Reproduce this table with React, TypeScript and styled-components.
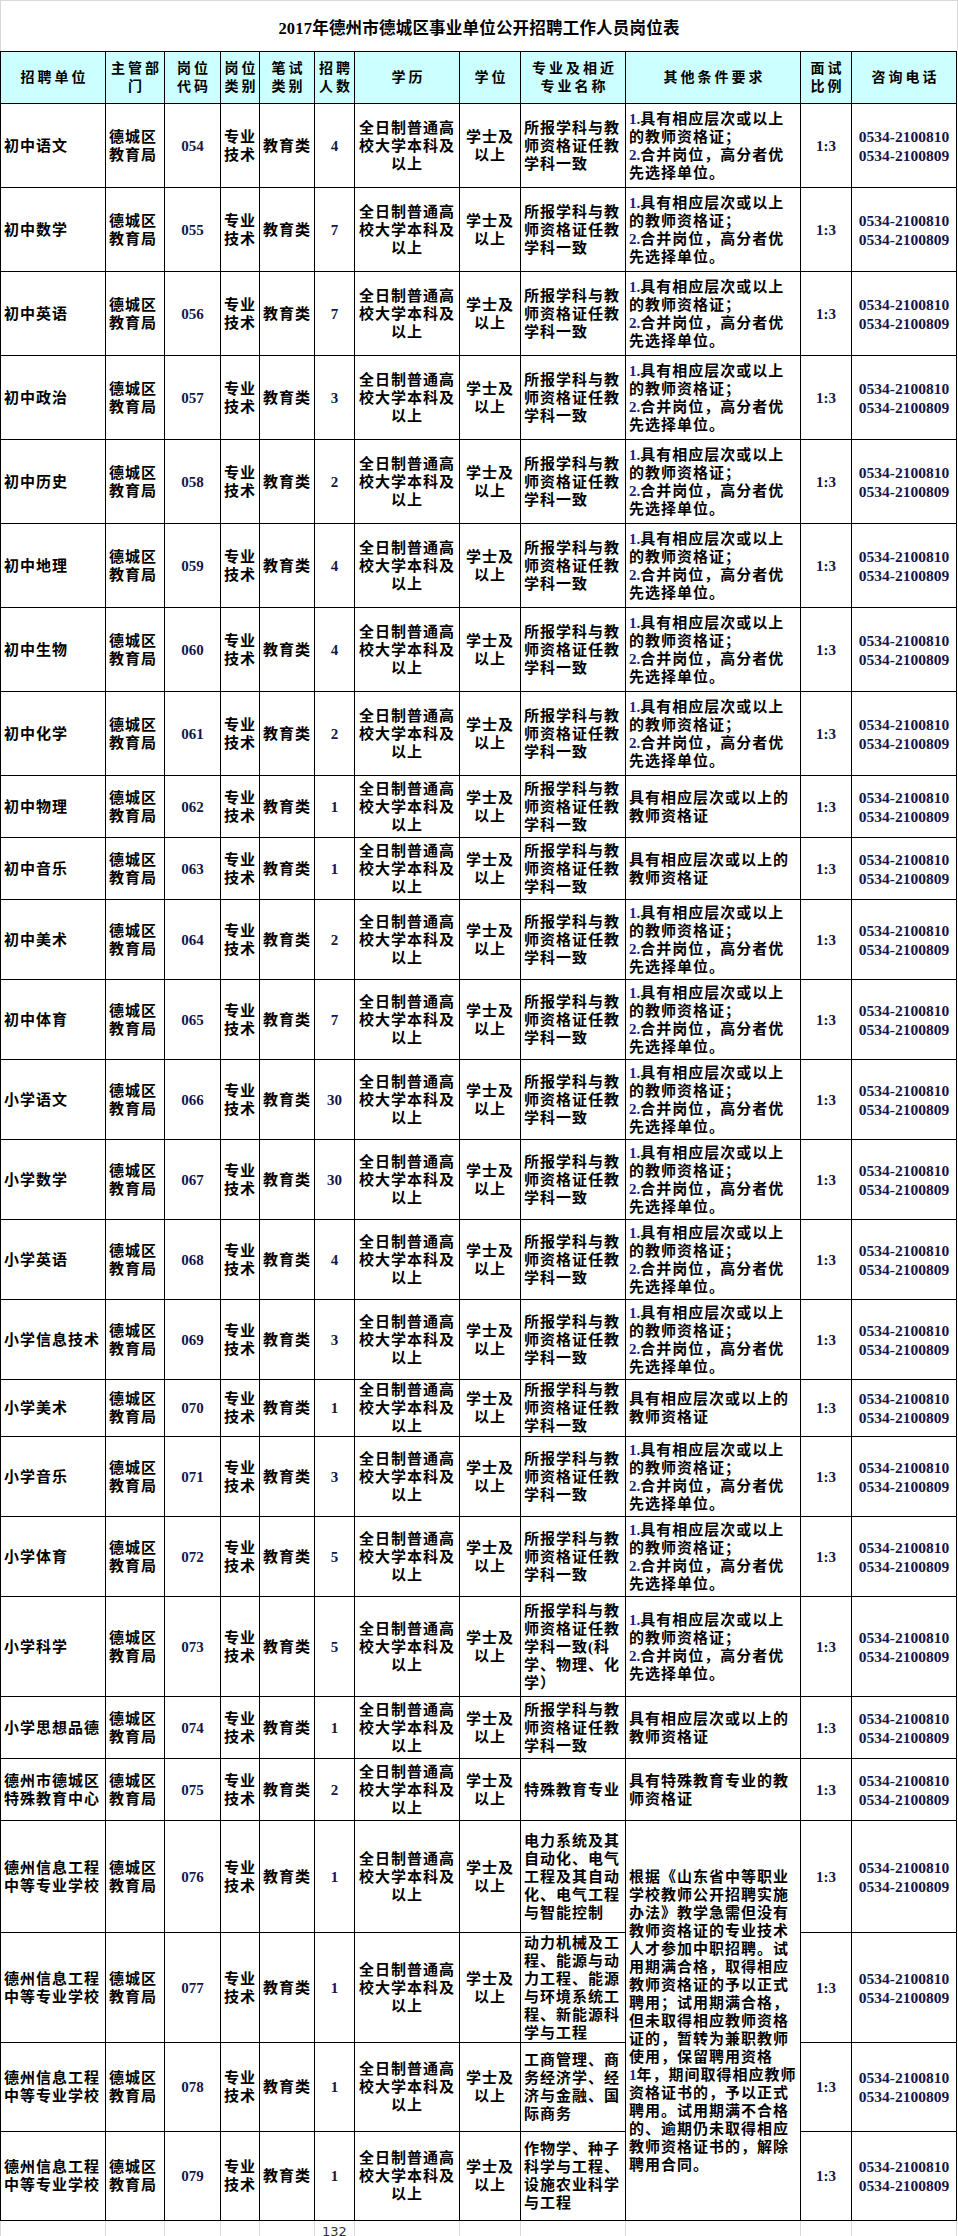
import React from "react";
import styled, { createGlobalStyle } from "styled-components";

const COLS = [104, 58, 55, 38, 54, 39, 104, 60, 104, 174, 50, 104];

const GlobalStyle = createGlobalStyle`
	html, body {
		margin: 0;
		padding: 0;
		background: #fff;
		overflow: hidden;
	}
	body {
		font-family: "Liberation Serif", "Noto Sans CJK SC", serif;
		color: #000;
	}
`;

type Row = {
	unit: string[];
	code: string;
	count: string;
	major: string[];
	cond?: string[];
	h: number;
};

const COND_A = ["1.具有相应层次或以上", "的教师资格证；", "2.合并岗位，高分者优", "先选择单位。"];
const COND_B = ["具有相应层次或以上的", "教师资格证"];
const MAJOR = ["所报学科与教", "师资格证任教", "学科一致"];
const SCHOOL = ["德州信息工程", "中等专业学校"];

const MERGED = [
	"根据《山东省中等职业",
	"学校教师公开招聘实施",
	"办法》教学急需但没有",
	"教师资格证的专业技术",
	"人才参加中职招聘。试",
	"用期满合格，取得相应",
	"教师资格证的予以正式",
	"聘用；试用期满合格，",
	"但未取得相应教师资格",
	"证的，暂转为兼职教师",
	"使用，保留聘用资格",
	"1年，期间取得相应教师",
	"资格证书的，予以正式",
	"聘用。试用期满不合格",
	"的、逾期仍未取得相应",
	"教师资格证书的，解除",
	"聘用合同。",
];

const ROWS: Row[] = [
	{ unit: ["初中语文"], code: "054", count: "4", major: MAJOR, cond: COND_A, h: 83 },
	{ unit: ["初中数学"], code: "055", count: "7", major: MAJOR, cond: COND_A, h: 83 },
	{ unit: ["初中英语"], code: "056", count: "7", major: MAJOR, cond: COND_A, h: 83 },
	{ unit: ["初中政治"], code: "057", count: "3", major: MAJOR, cond: COND_A, h: 83 },
	{ unit: ["初中历史"], code: "058", count: "2", major: MAJOR, cond: COND_A, h: 83 },
	{ unit: ["初中地理"], code: "059", count: "4", major: MAJOR, cond: COND_A, h: 83 },
	{ unit: ["初中生物"], code: "060", count: "4", major: MAJOR, cond: COND_A, h: 83 },
	{ unit: ["初中化学"], code: "061", count: "2", major: MAJOR, cond: COND_A, h: 83 },
	{ unit: ["初中物理"], code: "062", count: "1", major: MAJOR, cond: COND_B, h: 61 },
	{ unit: ["初中音乐"], code: "063", count: "1", major: MAJOR, cond: COND_B, h: 61 },
	{ unit: ["初中美术"], code: "064", count: "2", major: MAJOR, cond: COND_A, h: 79 },
	{ unit: ["初中体育"], code: "065", count: "7", major: MAJOR, cond: COND_A, h: 79 },
	{ unit: ["小学语文"], code: "066", count: "30", major: MAJOR, cond: COND_A, h: 79 },
	{ unit: ["小学数学"], code: "067", count: "30", major: MAJOR, cond: COND_A, h: 79 },
	{ unit: ["小学英语"], code: "068", count: "4", major: MAJOR, cond: COND_A, h: 79 },
	{ unit: ["小学信息技术"], code: "069", count: "3", major: MAJOR, cond: COND_A, h: 79 },
	{ unit: ["小学美术"], code: "070", count: "1", major: MAJOR, cond: COND_B, h: 56 },
	{ unit: ["小学音乐"], code: "071", count: "3", major: MAJOR, cond: COND_A, h: 79 },
	{ unit: ["小学体育"], code: "072", count: "5", major: MAJOR, cond: COND_A, h: 79 },
	{
		unit: ["小学科学"],
		code: "073",
		count: "5",
		major: ["所报学科与教", "师资格证任教", "学科一致(科", "学、物理、化", "学）"],
		cond: COND_A,
		h: 99,
	},
	{ unit: ["小学思想品德"], code: "074", count: "1", major: MAJOR, cond: COND_B, h: 61 },
	{
		unit: ["德州市德城区", "特殊教育中心"],
		code: "075",
		count: "2",
		major: ["特殊教育专业"],
		cond: ["具有特殊教育专业的教", "师资格证"],
		h: 61,
	},
	{
		unit: SCHOOL,
		code: "076",
		count: "1",
		major: ["电力系统及其", "自动化、电气", "工程及其自动", "化、电气工程", "与智能控制"],
		cond: MERGED,
		h: 111,
	},
	{
		unit: SCHOOL,
		code: "077",
		count: "1",
		major: ["动力机械及工", "程、能源与动", "力工程、能源", "与环境系统工", "程、新能源科", "学与工程"],
		h: 109,
	},
	{
		unit: SCHOOL,
		code: "078",
		count: "1",
		major: ["工商管理、商", "务经济学、经", "济与金融、国", "际商务"],
		h: 88,
	},
	{
		unit: SCHOOL,
		code: "079",
		count: "1",
		major: ["作物学、种子", "科学与工程、", "设施农业科学", "与工程"],
		h: 88,
	},
];

const HEADERS: string[][] = [
	["招聘单位"],
	["主管部", "门"],
	["岗位", "代码"],
	["岗位", "类别"],
	["笔试", "类别"],
	["招聘", "人数"],
	["学历"],
	["学位"],
	["专业及相近", "专业名称"],
	["其他条件要求"],
	["面试", "比例"],
	["咨询电话"],
];

const Page = styled.div`
	width: 958px;
	height: 2236px;
	overflow: hidden;
`;

const TitleBar = styled.div`
	box-sizing: border-box;
	width: 958px;
	height: 51px;
	border: 1px solid #d9d9d9;
	border-bottom: none;
	display: flex;
	align-items: center;
	justify-content: center;
	font-size: 16.5px;
	font-weight: 700;
	letter-spacing: 0.2px;
	padding-top: 1px;
`;

const Sheet = styled.div<{ $rows: number[] }>`
	display: grid;
	box-sizing: border-box;
	width: 957px;
	grid-template-columns: ${COLS.map((c) => `${c}px`).join(" ")};
	grid-template-rows: ${(p) => p.$rows.map((r) => `${r}px`).join(" ")};
	gap: 1px;
	padding: 1px;
	background: #000;
`;

const Cell = styled.div<{ $align?: "left" | "center"; $span?: number }>`
	background: #fff;
	display: flex;
	align-items: center;
	justify-content: ${(p) => (p.$align === "left" ? "flex-start" : "center")};
	text-align: ${(p) => (p.$align === "left" ? "left" : "center")};
	grid-row: ${(p) => (p.$span ? `span ${p.$span}` : "auto")};
	padding: 0 3px;
	overflow: hidden;
	white-space: nowrap;
	font-size: 15px;
	line-height: 18px;
	letter-spacing: 1px;
	font-weight: 700;
`;

const HeadCell = styled(Cell)`
	background: #ccffff;
	font-size: 14px;
	letter-spacing: 3px;
	padding: 0 0 0 3px;
`;

const Num = styled.span`
	font-family: "Liberation Serif", serif;
	font-weight: 700;
	font-size: 15px;
	letter-spacing: 0;
	color: #15154a;
`;

const Lead = styled.span`
	font-family: "Liberation Serif", serif;
	letter-spacing: 0;
	color: #1c1c7c;
`;

const Phones = styled.div`
	font-family: "Liberation Serif", serif;
	font-weight: 700;
	font-size: 15.5px;
	line-height: 19px;
	letter-spacing: 0;
	color: #15154a;
`;

const FootRow = styled.div`
	display: grid;
	box-sizing: border-box;
	width: 958px;
	grid-template-columns: ${COLS.map((c) => `${c}px`).join(" ")} 1px;
	gap: 1px;
	padding-left: 1px;
	height: 15px;
	background: #dadada;
`;

const FootCell = styled.div`
	background: #fff;
	overflow: hidden;
	text-align: center;
	font-family: "DejaVu Sans", sans-serif;
	font-size: 13px;
	line-height: 16px;
	padding-top: 3px;
	color: #333;
`;

const renderLine = (line: string) => {
	const m = line.match(/^(\d+\.?)(.*)$/);
	if (!m) return line;
	return (
		<>
			<Lead>{m[1]}</Lead>
			{m[2]}
		</>
	);
};

const Lines = ({ lines }: { lines: string[] }) => (
	<div>
		{lines.map((l, i) => (
			<div key={i}>{renderLine(l)}</div>
		))}
	</div>
);

const App = () => {
	const heights = [51, ...ROWS.map((r) => r.h)];
	const footCells = COLS.map((_, i) => i);

	return (
		<Page>
			<GlobalStyle />
			<TitleBar>2017年德州市德城区事业单位公开招聘工作人员岗位表</TitleBar>
			<Sheet $rows={heights}>
				{HEADERS.map((h, i) => (
					<HeadCell key={`h${i}`}>
						<Lines lines={h} />
					</HeadCell>
				))}
				{ROWS.map((r) => (
					<React.Fragment key={r.code}>
						<Cell $align="left">
							<Lines lines={r.unit} />
						</Cell>
						<Cell $align="left">
							<Lines lines={["德城区", "教育局"]} />
						</Cell>
						<Cell>
							<Num>{r.code}</Num>
						</Cell>
						<Cell>
							<Lines lines={["专业", "技术"]} />
						</Cell>
						<Cell>教育类</Cell>
						<Cell>
							<Num>{r.count}</Num>
						</Cell>
						<Cell>
							<Lines lines={["全日制普通高", "校大学本科及", "以上"]} />
						</Cell>
						<Cell>
							<Lines lines={["学士及", "以上"]} />
						</Cell>
						<Cell $align="left">
							<Lines lines={r.major} />
						</Cell>
						{r.cond && (
							<Cell $align="left" $span={r.cond === MERGED ? 4 : undefined}>
								<Lines lines={r.cond} />
							</Cell>
						)}
						<Cell>
							<Num>1:3</Num>
						</Cell>
						<Cell>
							<Phones>
								<div>0534-2100810</div>
								<div>0534-2100809</div>
							</Phones>
						</Cell>
					</React.Fragment>
				))}
			</Sheet>
			<FootRow>
				{footCells.map((i) => (
					<FootCell key={i}>{i === 5 ? "132" : ""}</FootCell>
				))}
				<FootCell />
			</FootRow>
		</Page>
	);
};

export default App;
